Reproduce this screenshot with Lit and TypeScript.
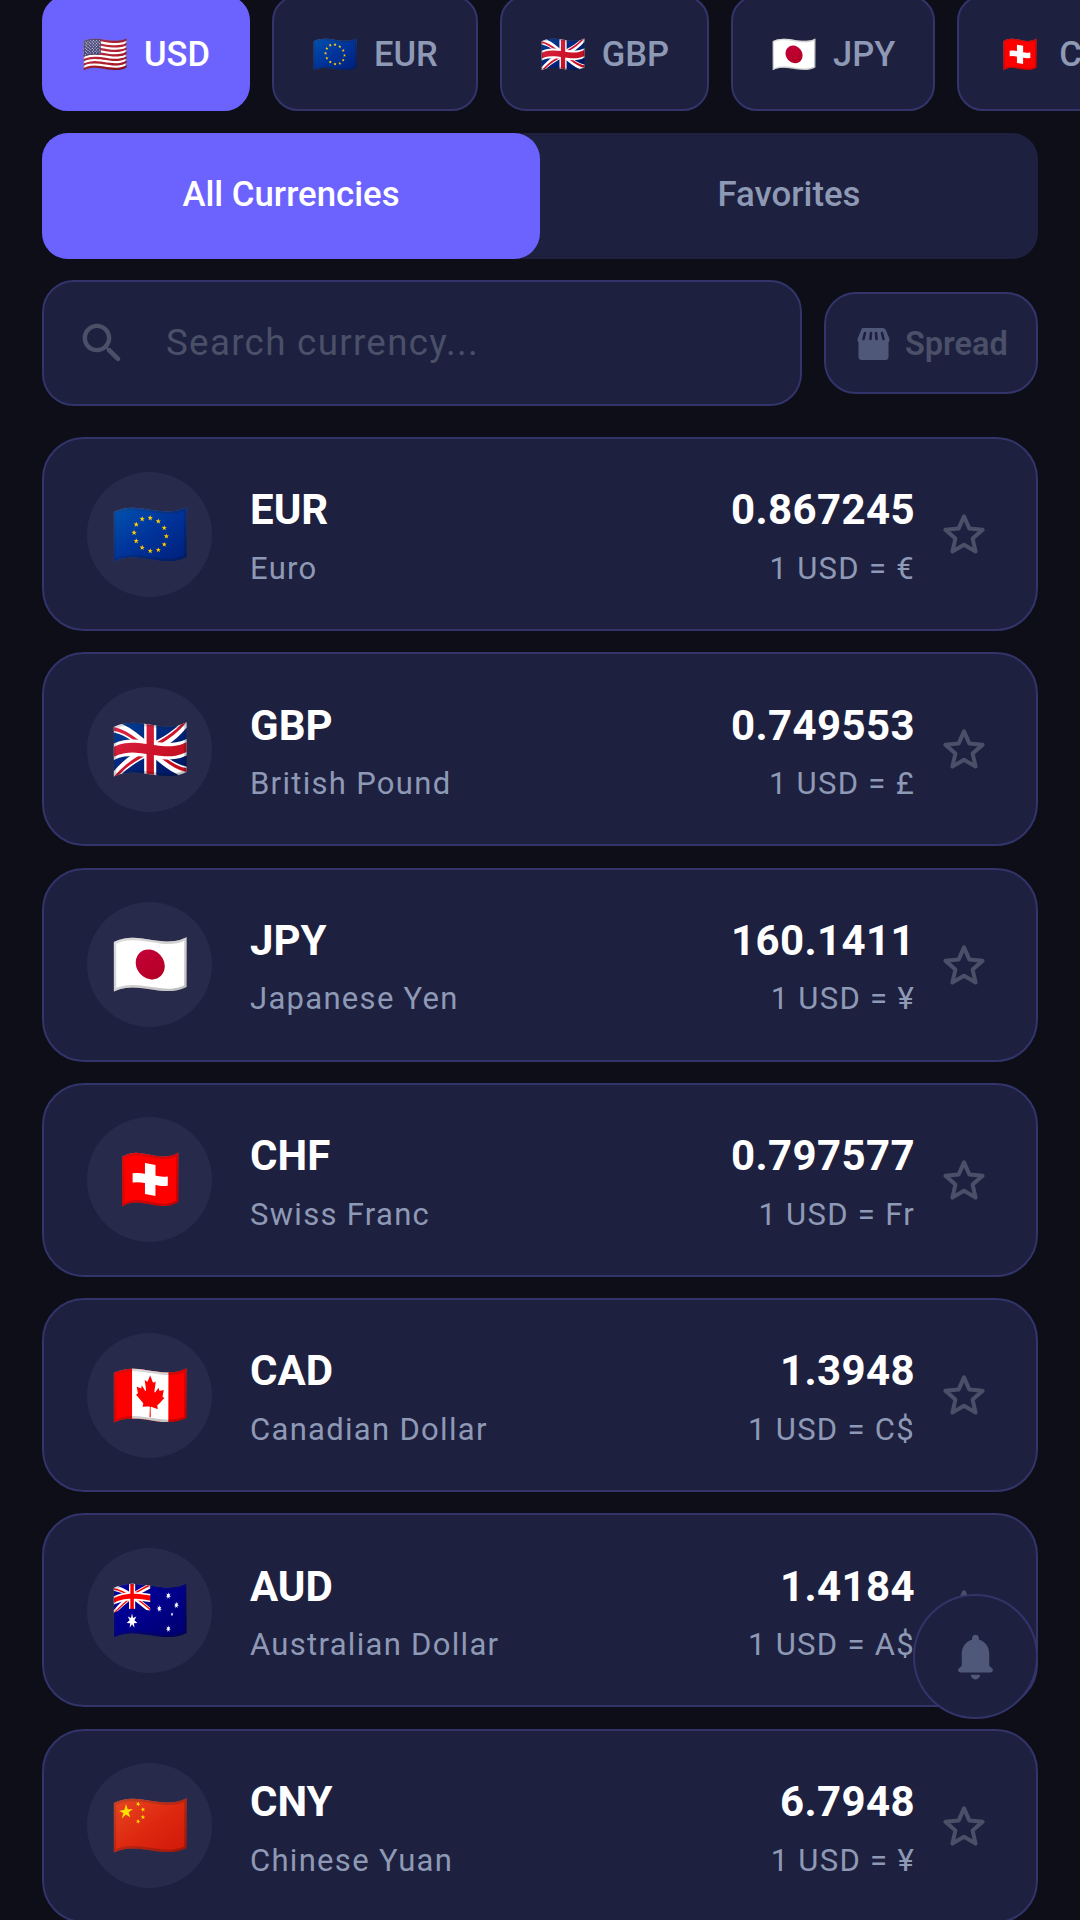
import { LitElement, html, css, svg } from 'lit';
import { customElement } from 'lit/decorators.js';

const chips = [
  ['🇺🇸', 'USD'],
  ['🇪🇺', 'EUR'],
  ['🇬🇧', 'GBP'],
  ['🇯🇵', 'JPY'],
  ['🇨🇭', 'CHF'],
];

const rows = [
  ['🇪🇺', 'EUR', 'Euro', '0.867245', '€'],
  ['🇬🇧', 'GBP', 'British Pound', '0.749553', '£'],
  ['🇯🇵', 'JPY', 'Japanese Yen', '160.1411', '¥'],
  ['🇨🇭', 'CHF', 'Swiss Franc', '0.797577', 'Fr'],
  ['🇨🇦', 'CAD', 'Canadian Dollar', '1.3948', 'C$'],
  ['🇦🇺', 'AUD', 'Australian Dollar', '1.4184', 'A$'],
  ['🇨🇳', 'CNY', 'Chinese Yuan', '6.7948', '¥'],
];

const searchIcon = svg`<path d="M15.5 14h-.79l-.28-.27C15.41 12.59 16 11.11 16 9.5 16 5.91 13.09 3 9.5 3S3 5.91 3 9.5 5.91 16 9.5 16c1.61 0 3.09-.59 4.23-1.57l.27.28v.79l4.25 4.25c.41.41 1.08.41 1.49 0 .41-.41.41-1.08 0-1.49L15.5 14zm-6 0C7.01 14 5 11.99 5 9.5S7.01 5 9.5 5 14 7.01 14 9.5 11.99 14 9.5 14z"/>`;
const storeIcon = svg`<path d="M7 0h19c1.500 0 2.800.9 3.400 2.300L32.600 10c.3.8.4 1.300.4 2 0 1-.4 1.800-1 2.400V29c0 1.700-1.300 3-3 3H5c-1.700 0-3-1.300-3-3V14.400c-.6-.6-1-1.400-1-2.400 0-.7.1-1.200.4-2l3.200-7.700C5.200.9 5.500 0 7 0z"/><g stroke="#1e2040" stroke-width="2.600" stroke-linecap="round"><path d="M8.500 5L7 11M14.500 5L14 11M19.500 5L20 11M25.500 5L27 11"/></g>`;
const bellIcon = svg`<path d="M12 22c1.100 0 2-.9 2-2h-4c0 1.100.9 2 2 2zm6-6v-5c0-3.070-1.630-5.640-4.500-6.320V4c0-.83-.67-1.500-1.500-1.500s-1.500.67-1.500 1.500v.68C7.640 5.360 6 7.920 6 11v5l-1.290 1.290c-.63.63-.19 1.710.7 1.710h13.170c.89 0 1.340-1.080.71-1.710L18 16z"/>`;
const starIcon = svg`<path d="M12 3.200l2.700 6.100 6.600.6-5 4.400 1.500 6.500L12 17.400l-5.800 3.400 1.500-6.500-5-4.400 6.600-.6z" fill="none" stroke="currentColor" stroke-width="2" stroke-linejoin="round"/>`;

@customElement('app-root')
export class AppRoot extends LitElement {
  static styles = css`
    :host {
      display: block;
      position: relative;
      width: 1080px;
      height: 1920px;
      overflow: hidden;
      background: #0d0e17;
      font-family: Roboto, 'Noto Sans', sans-serif;
    }
    * {
      box-sizing: border-box;
    }
    .page {
      display: flex;
      flex-direction: column;
      margin-top: -5px;
      padding: 0 42px;
      width: 1080px;
    }
    .chips {
      display: flex;
      gap: 22px;
      width: 1038px;
      height: 116px;
      margin-bottom: 22px;
    }
    .chip {
      flex: none;
      display: flex;
      align-items: center;
      gap: 16px;
      height: 116px;
      padding: 2px 38px 0;
      border-radius: 26px;
      border: 2.5px solid #32346a;
      background: #1e2040;
      color: #8e9ab5;
      font-size: 34.5px;
      font-weight: 500;
    }
    .chip.on {
      background: #6c63ff;
      border-color: #6c63ff;
      color: #fff;
    }
    .chip .flag {
      font-size: 37px;
    }
    .tabs {
      display: flex;
      height: 126px;
      border-radius: 26px;
      background: #1e2040;
      margin-bottom: 21px;
    }
    .tab {
      flex: 1;
      display: flex;
      align-items: center;
      justify-content: center;
      padding-bottom: 5px;
      border-radius: 26px;
      color: #8e9ab5;
      font-size: 34.75px;
      font-weight: 500;
    }
    .tab.on {
      background: #6c63ff;
      color: #fff;
    }
    .tools {
      display: flex;
      align-items: center;
      gap: 22px;
      margin-bottom: 31px;
    }
    .search {
      flex: 1;
      display: flex;
      align-items: center;
      height: 126px;
      padding: 0 32px;
      gap: 37px;
      border-radius: 32px;
      border: 2.5px solid #32346a;
      background: #1e2040;
      color: #4a5068;
      font-size: 36.75px;
      letter-spacing: 1.3px;
    }
    .search span {
      padding-bottom: 2px;
    }
    .search svg {
      width: 53px;
      height: 53px;
      fill: #4a5068;
      flex: none;
    }
    .spread {
      display: flex;
      align-items: center;
      gap: 15px;
      width: 214px;
      height: 102px;
      padding: 2px 0 0 30px;
      border-radius: 32px;
      border: 2.5px solid #32346a;
      background: #1e2040;
      color: #4a5068;
      font-size: 32.5px;
      font-weight: 600;
    }
    .spread svg {
      width: 34px;
      height: 32px;
      fill: #4f5878;
      flex: none;
    }
    .list {
      display: flex;
      flex-direction: column;
      gap: 21.3px;
    }
    .card {
      display: flex;
      align-items: center;
      height: 194px;
      padding: 0 48px 0 43px;
      border-radius: 42px;
      border: 2.5px solid #32346a;
      background: #1e2040;
    }
    .avatar {
      flex: none;
      display: flex;
      align-items: center;
      justify-content: center;
      width: 125px;
      height: 125px;
      border-radius: 50%;
      background: #282a4b;
      font-size: 63px;
      margin-right: 38px;
    }
    .who {
      flex: 1;
    }
    .who,
    .vals {
      padding-top: 5px;
    }
    .code,
    .rate {
      color: #fff;
      font-size: 42px;
      font-weight: 700;
      line-height: 48px;
    }
    .rate {
      letter-spacing: 0.4px;
    }
    .name,
    .per {
      margin-top: 16.5px;
      color: #8e9ab5;
      font-size: 31px;
      line-height: 36px;
      letter-spacing: 1.3px;
    }
    .vals {
      text-align: right;
    }
    .star {
      flex: none;
      width: 48px;
      height: 48px;
      margin-left: 25px;
      color: #4a5068;
    }
    .fab {
      position: absolute;
      left: 913px;
      top: 1594px;
      width: 125px;
      height: 125px;
      display: flex;
      align-items: center;
      justify-content: center;
      border-radius: 50%;
      background: #1e2040;
      border: 2px solid #32346a;
    }
    .fab svg {
      width: 55px;
      height: 55px;
      fill: #4f5878;
    }
  `;

  render() {
    return html`
      <div class="page">
        <div class="chips">
          ${chips.map(
            ([flag, code], i) => html`<div class="chip ${i === 0 ? 'on' : ''}">
              <span class="flag">${flag}</span><span>${code}</span>
            </div>`
          )}
        </div>
        <div class="tabs">
          <div class="tab on">All Currencies</div>
          <div class="tab">Favorites</div>
        </div>
        <div class="tools">
          <div class="search">
            <svg viewBox="0 0 24 24">${searchIcon}</svg>
            <span>Search currency...</span>
          </div>
          <div class="spread">
            <svg viewBox="0 0 33 32">${storeIcon}</svg>
            <span>Spread</span>
          </div>
        </div>
        <div class="list">
          ${rows.map(
            ([flag, code, name, rate, sym]) => html`<div class="card">
              <div class="avatar">${flag}</div>
              <div class="who">
                <div class="code">${code}</div>
                <div class="name">${name}</div>
              </div>
              <div class="vals">
                <div class="rate">${rate}</div>
                <div class="per">1 USD = ${sym}</div>
              </div>
              <svg class="star" viewBox="0 0 24 24">${starIcon}</svg>
            </div>`
          )}
        </div>
      </div>
      <div class="fab"><svg viewBox="0 0 24 24">${bellIcon}</svg></div>
    `;
  }
}
